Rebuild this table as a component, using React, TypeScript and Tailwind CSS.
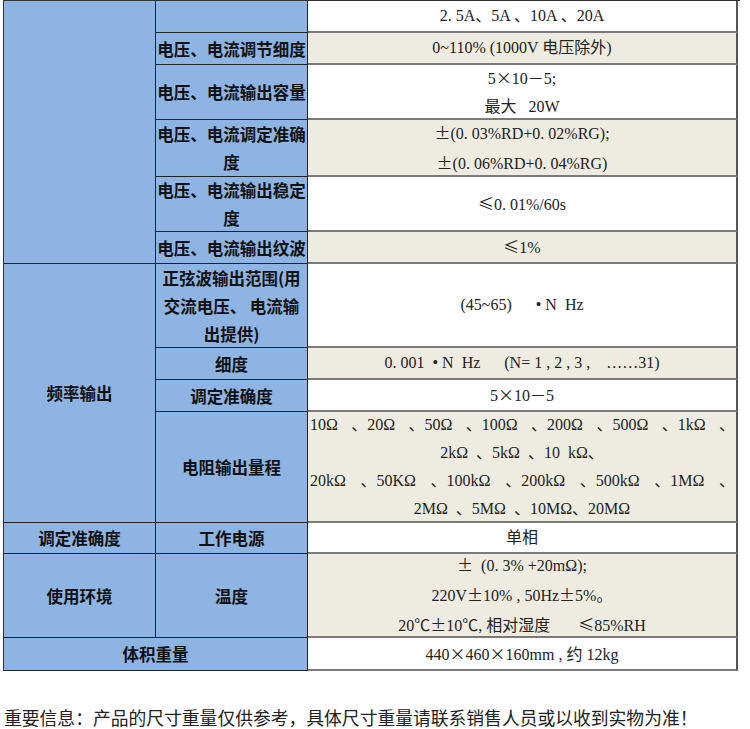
import React from 'react';

const label =
    "flex items-center justify-center text-center bg-[#8db4e2] border-r border-b border-[#222] font-['Noto_Sans_CJK_SC',sans-serif] font-bold text-[16.5px] leading-[28px] text-[#111]";
const value =
    "flex flex-col items-center justify-center text-center border-r-2 border-r-[#555] border-b-2 border-b-[#7a7a7a] font-['Liberation_Serif','Noto_Sans_CJK_SC',serif] text-[16px] leading-[28px] text-[#222] whitespace-pre";

// full-width symbols come from the CJK font, like the original song typeface
function T({ s }: { s: string }) {
    const parts = s.split(/([×±≤℃－])/);
    return (
        <span>
            {parts.map((p, i) =>
                /^[×±≤℃－]$/.test(p) ? (
                    <span key={i} className="font-['Noto_Sans_CJK_SC',sans-serif]">
                        {p}
                    </span>
                ) : (
                    <React.Fragment key={i}>{p}</React.Fragment>
                )
            )}
        </span>
    );
}

export default function App() {
    return (
        <div className="w-[750px] h-[729px] bg-white overflow-hidden">
            <div className="ml-[3px] w-[737px] border-l border-t border-[#333] grid grid-cols-[152px_152px_430px] grid-rows-[32px_32px_55px_57px_55px_32px_84px_32px_32px_111px_31px_84px_33px]">
                {/* first column groups */}
                <div className={`${label} col-start-1 row-start-1 row-span-6`}></div>
                <div className={`${label} col-start-1 row-start-7 row-span-4`}>频率输出</div>
                <div className={`${label} col-start-1 row-start-11`}>调定准确度</div>
                <div className={`${label} col-start-1 row-start-12`}>使用环境</div>
                <div className={`${label} col-start-1 col-span-2 row-start-13`}>体积重量</div>

                {/* second column */}
                <div className={`${label} col-start-2 row-start-1`}></div>
                <div className={`${label} col-start-2 row-start-2`}>电压、电流调节细度</div>
                <div className={`${label} col-start-2 row-start-3`}>电压、电流输出容量</div>
                <div className={`${label} col-start-2 row-start-4`}>电压、电流调定准确度</div>
                <div className={`${label} col-start-2 row-start-5`}>电压、电流输出稳定度</div>
                <div className={`${label} col-start-2 row-start-6`}>电压、电流输出纹波</div>
                <div className={`${label} col-start-2 row-start-7`}>
                    <span>
                        正弦波输出范围(用
                        <br />
                        交流电压、 电流输
                        <br />
                        出提供)
                    </span>
                </div>
                <div className={`${label} col-start-2 row-start-8`}>细度</div>
                <div className={`${label} col-start-2 row-start-9`}>调定准确度</div>
                <div className={`${label} col-start-2 row-start-10`}>电阻输出量程</div>
                <div className={`${label} col-start-2 row-start-11`}>工作电源</div>
                <div className={`${label} col-start-2 row-start-12`}>温度</div>

                {/* values */}
                <div className={`${value} col-start-3 row-start-1 bg-white`}>2. 5A、5A 、10A 、20A</div>
                <div className={`${value} col-start-3 row-start-2 bg-[#eeece1]`}>0~110% (1000V 电压除外)</div>
                <div className={`${value} col-start-3 row-start-3 bg-white`}>
                    <div><T s="5×10－5;" /></div>
                    <div>最大   20W</div>
                </div>
                <div className={`${value} col-start-3 row-start-4 bg-[#eeece1]`}>
                    <div><T s="±(0. 03%RD+0. 02%RG);" /></div>
                    <div><T s="±(0. 06%RD+0. 04%RG)" /></div>
                </div>
                <div className={`${value} col-start-3 row-start-5 bg-white`}><T s="≤0. 01%/60s" /></div>
                <div className={`${value} col-start-3 row-start-6 bg-[#eeece1]`}><T s="≤1%" /></div>
                <div className={`${value} col-start-3 row-start-7 bg-white`}>(45~65)      • N  Hz</div>
                <div className={`${value} col-start-3 row-start-8 bg-[#eeece1]`}>0. 001  • N  Hz      (N= 1 , 2 , 3 ,    ……31)</div>
                <div className={`${value} col-start-3 row-start-9 bg-white`}><T s="5×10－5" /></div>
                <div className={`${value} col-start-3 row-start-10 bg-[#eeece1] items-stretch`}>
                    <div className="flex justify-between pl-[2px] pr-[1px]">
                        <span>10Ω</span>
                        <span>、20Ω</span>
                        <span>、50Ω</span>
                        <span>、100Ω</span>
                        <span>、200Ω</span>
                        <span>、500Ω</span>
                        <span>、1kΩ</span>
                        <span>、</span>
                    </div>
                    <div>2kΩ  、5kΩ  、10  kΩ、</div>
                    <div className="flex justify-between pl-[2px] pr-[1px]">
                        <span>20kΩ</span>
                        <span>、50KΩ</span>
                        <span>、100kΩ</span>
                        <span>、200kΩ</span>
                        <span>、500kΩ</span>
                        <span>、1MΩ</span>
                        <span>、</span>
                    </div>
                    <div>2MΩ  、5MΩ  、10MΩ、20MΩ</div>
                </div>
                <div className={`${value} col-start-3 row-start-11 bg-white`}>单相</div>
                <div className={`${value} col-start-3 row-start-12 bg-[#eeece1]`}>
                    <div><T s="±  (0. 3% +20mΩ);" /></div>
                    <div><T s="220V±10% , 50Hz±5%。" /></div>
                    <div><T s="20℃±10℃, 相对湿度       ≤85%RH" /></div>
                </div>
                <div className={`${value} col-start-3 row-start-13 bg-white`}><T s="440×460×160mm , 约 12kg" /></div>
            </div>

            {/* footer note */}
            <p className="mt-[36px] pl-[4px] whitespace-nowrap font-['Noto_Sans_CJK_SC',sans-serif] text-[17.8px] leading-[20px] text-[#222]">
                重要信息：产品的尺寸重量仅供参考，具体尺寸重量请联系销售人员或以收到实物为准！
            </p>
        </div>
    );
}
